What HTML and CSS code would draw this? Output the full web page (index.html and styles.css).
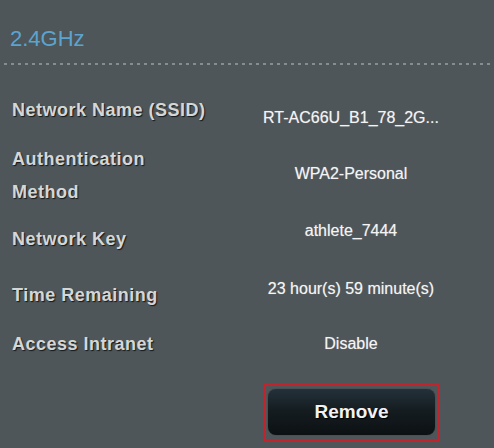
FILE: index.html
```html
<!DOCTYPE html>
<html lang="en">
<head>
<meta charset="utf-8">
<title>2.4GHz client</title>
<link rel="stylesheet" href="styles.css">
</head>
<body>
<section class="panel">
  <h2 class="band">2.4GHz</h2>
  <div class="divider"></div>
  <dl class="info">
    <dt>Network Name (SSID)</dt>
    <dd>RT-AC66U_B1_78_2G...</dd>
    <dt>Authentication<br>Method</dt>
    <dd>WPA2-Personal</dd>
    <dt>Network Key</dt>
    <dd>athlete_7444</dd>
    <dt>Time Remaining</dt>
    <dd>23 hour(s) 59 minute(s)</dd>
    <dt>Access Intranet</dt>
    <dd>Disable</dd>
    <div class="actions">
      <button class="remove" type="button">Remove</button>
    </div>
  </dl>
</section>
</body>
</html>
```
FILE: styles.css
```css
html, body {
  margin: 0;
  padding: 0;
}

body {
  background: #4e5659;
  width: 494px;
  height: 448px;
  overflow: hidden;
  font-family: "Liberation Sans", Arial, sans-serif;
}

.panel {
  display: flex;
  flex-direction: column;
}

.band {
  margin: 26px 0 0 10px;
  font-size: 22px;
  line-height: 26px;
  font-weight: normal;
  color: #5ca4cf;
}

.divider {
  margin-top: 11px;
  height: 2px;
  background: repeating-linear-gradient(90deg, transparent 0 4px, #858d90 4px 7px);
}

.info {
  display: grid;
  grid-template-columns: 228px 222px;
  grid-template-rows: 49px 71px 58px 55px 56px auto;
  margin: 29px 0 0 12px;
}

.info dt {
  margin: 0;
  font-size: 18px;
  line-height: 33px;
  font-weight: bold;
  letter-spacing: 0.5px;
  color: #d5d7d7;
  text-shadow: 1px 1px 1px #15191b;
  grid-column: 1;
}

.info dd {
  margin: 0;
  font-size: 16px;
  line-height: 33px;
  color: #f4f4f4;
  text-align: center;
  text-shadow: 0 0 1px rgba(255, 255, 255, 0.45);
  grid-column: 2;
}

.info dd:nth-of-type(1) { padding-top: 7px; }
.info dd:nth-of-type(2) { padding-top: 14px; }
.info dt:nth-of-type(3) { padding-top: 9px; }
.info dt:nth-of-type(4) { padding-top: 7px; }
.info dt:nth-of-type(5) { padding-top: 1px; }

.actions {
  grid-column: 2;
  justify-self: center;
  width: 176px;
  height: 59px;
  box-sizing: border-box;
  border: 2px solid #c1242c;
  padding: 4px 2px 5px 3px;
  display: flex;
}

.remove {
  flex: 1;
  border: none;
  border-radius: 8px;
  background: linear-gradient(180deg, #24313a 0%, #151d21 45%, #0c1012 100%);
  box-shadow: 0 0 1px rgba(0, 0, 0, 0.6);
  color: #f2f2f2;
  font-family: "Liberation Sans", Arial, sans-serif;
  font-size: 19px;
  font-weight: bold;
  text-shadow: 1px 1px 1px #000;
  padding: 0;
}
```
